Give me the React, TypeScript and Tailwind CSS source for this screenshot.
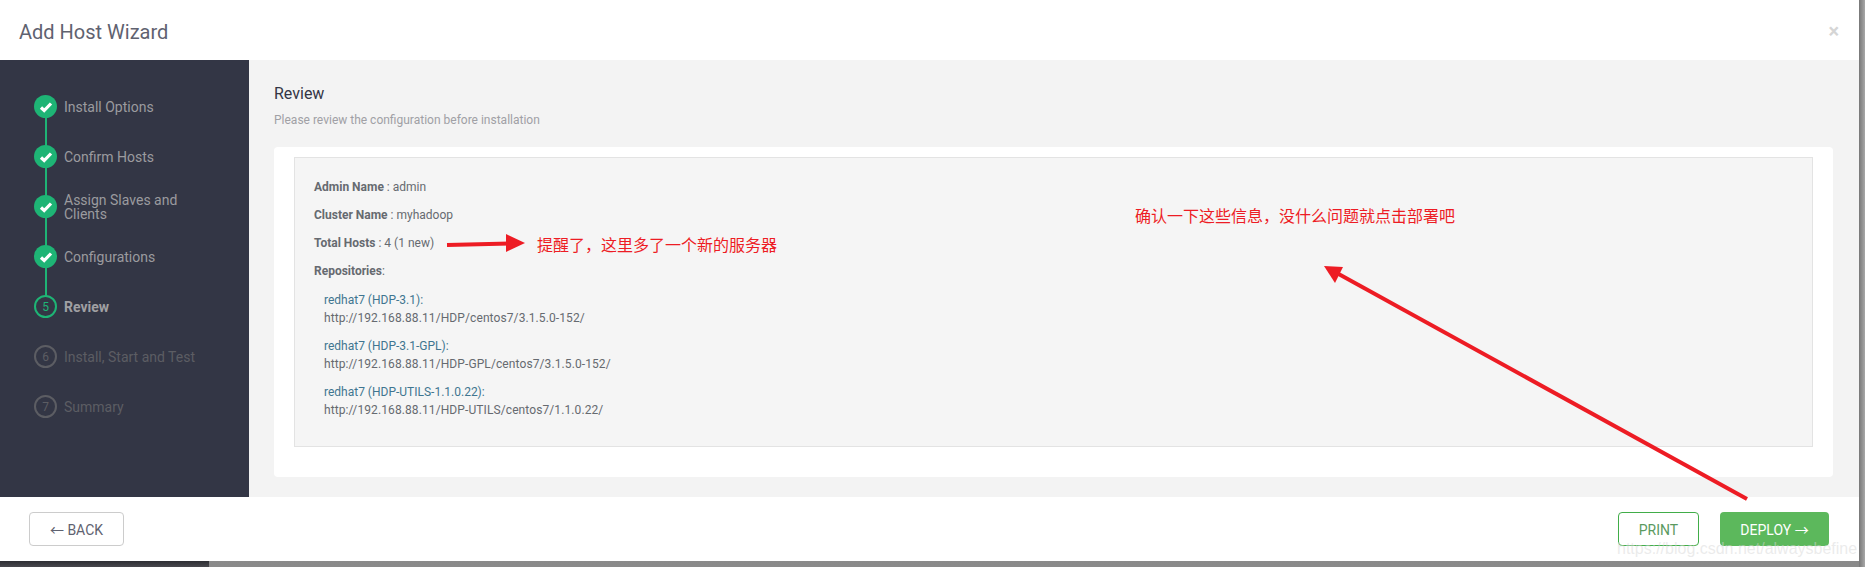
import React from 'react'

const font = { fontFamily: 'Roboto, "Noto Sans CJK SC", sans-serif' }

const steps = [
  { n: 1, label: 'Install Options', state: 'done' },
  { n: 2, label: 'Confirm Hosts', state: 'done' },
  { n: 3, label: 'Assign Slaves and Clients', state: 'done' },
  { n: 4, label: 'Configurations', state: 'done' },
  { n: 5, label: 'Review', state: 'current' },
  { n: 6, label: 'Install, Start and Test', state: 'todo' },
  { n: 7, label: 'Summary', state: 'todo' },
]

const repos = [
  { name: 'redhat7 (HDP-3.1):', url: 'http://192.168.88.11/HDP/centos7/3.1.5.0-152/' },
  { name: 'redhat7 (HDP-3.1-GPL):', url: 'http://192.168.88.11/HDP-GPL/centos7/3.1.5.0-152/' },
  { name: 'redhat7 (HDP-UTILS-1.1.0.22):', url: 'http://192.168.88.11/HDP-UTILS/centos7/1.1.0.22/' },
]

const Step = ({ n, label, state }: { n: number; label: string; state: string }) => (
  <div className="relative flex h-[50px] items-start gap-[7px]">
    {state === 'done' && <div className="absolute left-[11px] top-[22px] h-[30px] w-[2px] bg-[#1eb475]" />}
    {state === 'done' ? (
      <div className="flex h-[23px] w-[23px] shrink-0 items-center justify-center rounded-full bg-[#1eb475]">
        <svg width="14" height="12" viewBox="0 0 14 12">
          <path d="M2 6.5 L5.2 9.5 L12 2.5" fill="none" stroke="#ffffff" strokeWidth="3.2" />
        </svg>
      </div>
    ) : (
      <div
        className={`flex h-[23px] w-[23px] shrink-0 items-center justify-center rounded-full border-2 text-[12px] ${
          state === 'current' ? 'border-[#1eb475] text-[#1eb475]' : 'border-[#5c5d63] text-[#5c5d63]'
        }`}
      >
        {n}
      </div>
    )}
    <div
      className={`flex h-[23px] items-center pt-[1px] text-[14px] leading-[14px] ${
        n === 3 ? 'w-[130px]' : 'w-[170px]'
      } ${state === 'current' ? 'font-bold text-[#a0a0a3]' : state === 'done' ? 'text-[#9b9b9f]' : 'text-[#5c5d63]'}`}
    >
      {label}
    </div>
  </div>
)

export default function App() {
  return (
    <div className="relative h-[567px] w-[1865px] overflow-hidden bg-gradient-to-b from-[#666666] to-[#8a8a8a]" style={font}>
      <div className="absolute bottom-0 left-0 h-[6px] w-[209px] bg-gradient-to-b from-[#2d2e33] to-[#48484d]" />
      <div className="absolute right-0 top-0 h-full w-[6px] bg-gradient-to-r from-[#777777] to-[#a8a8a8]" />
      <div className="relative flex h-[561px] w-[1859px] flex-col bg-white">
        <div className="flex h-[60px] shrink-0 items-center justify-between pl-[19px] pr-[20px]">
          <h1 className="pt-[4px] text-[20px] font-normal text-[#5f6270]">Add Host Wizard</h1>
          <span className="pt-[1px] text-[20px] font-bold leading-none text-[#d5d5d5]">×</span>
        </div>

        <div className="flex h-[437px] shrink-0">
          <aside className="w-[249px] shrink-0 bg-[#333645] pl-[34px] pt-[35px]">
            {steps.map((s) => (
              <Step key={s.n} n={s.n} label={s.label} state={s.state} />
            ))}
          </aside>
          <main className="flex-1 bg-[#f3f3f3] pl-[25px] pr-[26px] pt-[24px]">
            <h2 className="text-[16px] font-normal leading-[20px] text-[#333645]">Review</h2>
            <p className="mt-[8px] text-[12px] leading-[16px] text-[#a0a0a5]">Please review the configuration before installation</p>
            <div className="mt-[19px] h-[330px] rounded-[4px] bg-white pl-[20px] pr-[20px] pt-[10px]">
              <div className="h-[290px] border border-[#e3e3e3] bg-[#f5f5f5] pl-[19px] pt-[21px] text-[12px] leading-[16px] text-[#666a70]">
                <p><b>Admin Name</b> : admin</p>
                <p className="mt-[12px]"><b>Cluster Name</b> : myhadoop</p>
                <p className="mt-[12px]"><b>Total Hosts</b> : 4 (1 new)</p>
                <p className="mt-[12px]"><b>Repositories</b>:</p>
                <div className="ml-[10px] mt-[12px] flex flex-col gap-[10px] leading-[18px]">
                  {repos.map((r) => (
                    <div key={r.name}>
                      <div className="text-[#3f7590]">{r.name}</div>
                      <div className="tracking-[0.1px]">{r.url}</div>
                    </div>
                  ))}
                </div>
              </div>
            </div>
          </main>
        </div>

        <div className="flex flex-1 items-center justify-between pl-[29px] pr-[30px]">
          <button className="flex h-[34px] w-[95px] items-center justify-center rounded-[4px] border border-[#cccccc] pt-[2px] text-[14px] text-[#5f6270]">
            ← BACK
          </button>
          <div className="flex gap-[21px]">
            <button className="flex h-[34px] w-[81px] items-center justify-center rounded-[4px] border border-[#41ad49] pt-[2px] text-[14px] text-[#5b9a5f]">
              PRINT
            </button>
            <button className="flex h-[34px] w-[109px] items-center justify-center rounded-[4px] bg-[#5cb85c] pt-[2px] text-[14px] text-white">
              DEPLOY →
            </button>
          </div>
        </div>
      </div>

      {/* red annotations pasted over the screenshot */}
      <svg className="pointer-events-none absolute left-0 top-0" width="1865" height="567">
        <line x1="447" y1="245" x2="510" y2="243.5" stroke="#ed1c24" strokeWidth="4" />
        <polygon points="506,234 525,243 506,252" fill="#ed1c24" />
        <line x1="1747" y1="499" x2="1335" y2="272" stroke="#ed1c24" strokeWidth="4" />
        <polygon points="1324,266 1343,267 1335,283" fill="#ed1c24" />
      </svg>
      <span className="absolute left-[537px] top-[236px] text-[16px] leading-[20px] text-[#ed1c24]">提醒了，这里多了一个新的服务器</span>
      <span className="absolute left-[1135px] top-[207px] text-[16px] leading-[20px] text-[#ed1c24]">确认一下这些信息，没什么问题就点击部署吧</span>
      <span className="absolute left-[1617px] top-[540px] text-[16px] leading-[18px] text-[#d8d8d8]/50 [font-family:'Liberation_Sans',sans-serif]">https://blog.csdn.net/alwaysbefine</span>
    </div>
  )
}
